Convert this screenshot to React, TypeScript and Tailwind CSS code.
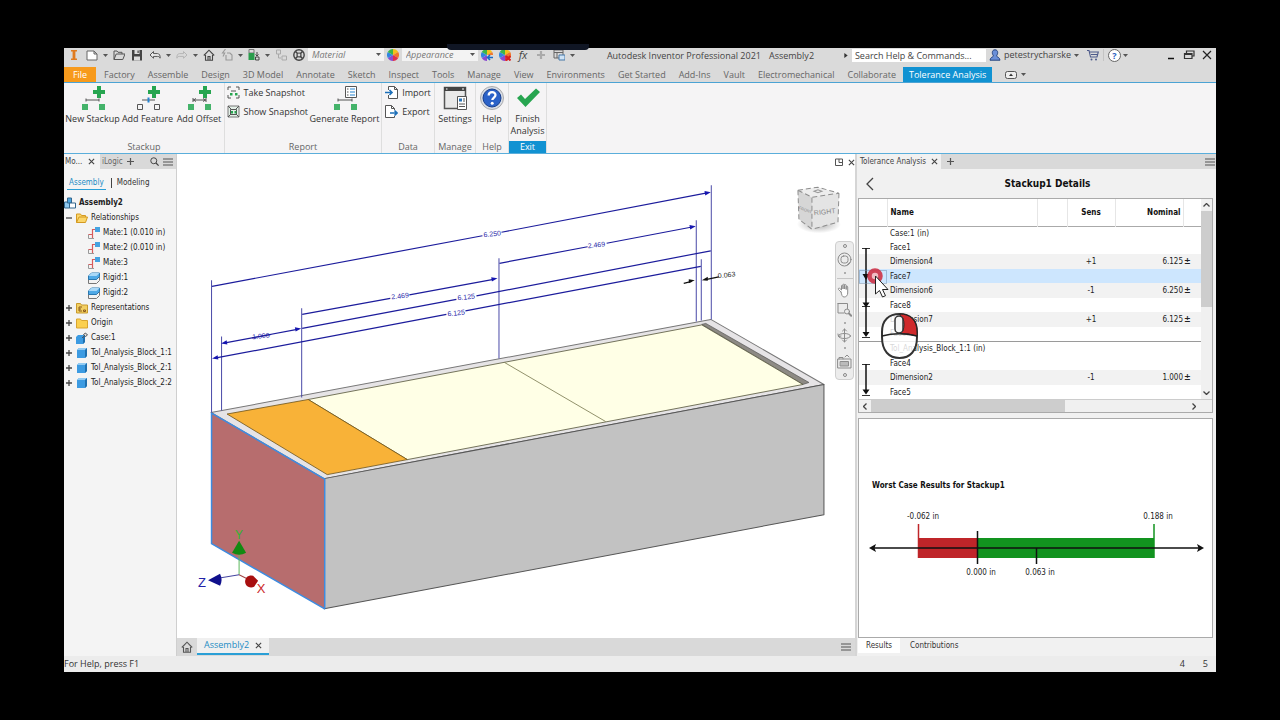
import type { ReactNode } from 'react';

const ui = 'font-["Open_Sans","Noto_Sans",sans-serif]';
const dense = 'font-["DejaVu_Sans_Condensed","DejaVu_Sans",sans-serif]';

const ribbonTabs = [
  'Factory', 'Assemble', 'Design', '3D Model', 'Annotate', 'Sketch', 'Inspect', 'Tools', 'Manage', 'View',
  'Environments', 'Get Started', 'Add-Ins', 'Vault', 'Electromechanical', 'Collaborate',
];

const tree = [
  { label: 'Relationships', level: 0, sign: '-', icon: 'folderOpen' },
  { label: 'Mate:1 (0.010 in)', level: 1, sign: '', icon: 'mate' },
  { label: 'Mate:2 (0.010 in)', level: 1, sign: '', icon: 'mate' },
  { label: 'Mate:3', level: 1, sign: '', icon: 'mate' },
  { label: 'Rigid:1', level: 1, sign: '', icon: 'rigid' },
  { label: 'Rigid:2', level: 1, sign: '', icon: 'rigid' },
  { label: 'Representations', level: 0, sign: '+', icon: 'reps' },
  { label: 'Origin', level: 0, sign: '+', icon: 'folder' },
  { label: 'Case:1', level: 0, sign: '+', icon: 'pinned' },
  { label: 'Tol_Analysis_Block_1:1', level: 0, sign: '+', icon: 'part' },
  { label: 'Tol_Analysis_Block_2:1', level: 0, sign: '+', icon: 'part' },
  { label: 'Tol_Analysis_Block_2:2', level: 0, sign: '+', icon: 'part' },
];

const rows = [
  { name: 'Case:1 (in)', kind: 'part' },
  { name: 'Face1', kind: 'face' },
  { name: 'Dimension4', kind: 'dim', sens: '+1', nominal: '6.125' },
  { name: 'Face7', kind: 'selected' },
  { name: 'Dimension6', kind: 'dim', sens: '-1', nominal: '6.250' },
  { name: 'Face8', kind: 'face' },
  { name: 'Dimension7', kind: 'dim', sens: '+1', nominal: '6.125' },
  { name: 'Face2', kind: 'face' },
  { name: 'Tol_Analysis_Block_1:1 (in)', kind: 'group' },
  { name: 'Face4', kind: 'face' },
  { name: 'Dimension2', kind: 'dim', sens: '-1', nominal: '1.000' },
  { name: 'Face5', kind: 'face' },
];

const rowStyles: Record<string, string> = {
  part: 'h-[14px]',
  face: 'h-[14px]',
  dim: 'h-[15px] bg-[#f2f2f2]',
  selected: 'h-[14px] bg-[#cde6fe]',
  group: 'h-[15px] border-t border-[#9a9a9a]',
};

/* ---------- small icons ---------- */

function Caret() {
  return (
    <svg className="h-[3px] w-[5px]" viewBox="0 0 5 3" aria-hidden="true">
      <path d="M0 0h5L2.5 3z" fill="#555" />
    </svg>
  );
}

function Svg({ children, className = 'size-3', box = '0 0 12 12' }: { children: ReactNode; className?: string; box?: string }) {
  return (
    <svg className={`shrink-0 ${className}`} viewBox={box} fill="none" aria-hidden="true">
      {children}
    </svg>
  );
}

function ColorWheel() {
  return (
    <>
      <path d="M6 6V0a6 6 0 0 1 5.2 3z" fill="#f3c11b" />
      <path d="M6 6l5.2-3a6 6 0 0 1 0 6z" fill="#f0762b" />
      <path d="M6 6l5.2 3A6 6 0 0 1 6 12z" fill="#e0304b" />
      <path d="M6 6v6a6 6 0 0 1-5.2-3z" fill="#8a4bd0" />
      <path d="M6 6L.8 9a6 6 0 0 1 0-6z" fill="#2f86e0" />
      <path d="M6 6L.8 3A6 6 0 0 1 6 0z" fill="#3ab54a" />
    </>
  );
}

function Close({ className = 'size-[7px]' }: { className?: string }) {
  return (
    <Svg className={className} box="0 0 8 8">
      <path d="M1 1l6 6M7 1L1 7" stroke="#444" strokeWidth="1.3" />
    </Svg>
  );
}

function Plus() {
  return (
    <Svg className="size-[7px]" box="0 0 8 8">
      <path d="M4 0v8M0 4h8" stroke="#555" strokeWidth="1.4" />
    </Svg>
  );
}

function Menu() {
  return (
    <Svg className="h-2 w-[10px]" box="0 0 10 8">
      <path d="M0 1h10M0 4h10M0 7h10" stroke="#555" strokeWidth="1.2" />
    </Svg>
  );
}

function HomeIcon() {
  return (
    <Svg>
      <path d="M.8 6.5L6 1.2l5.2 5.3M2.5 6v5.2h7V6M5 11V7.5h2V11" stroke="#555" strokeWidth="1.1" />
    </Svg>
  );
}

const quickIcons: Record<string, ReactNode> = {
  inventor: <path d="M3 1h6v1.6H7.4v6.8H9V11H3V9.4h1.6V2.6H3z" fill="#e07b1f" />,
  new: <path d="M1 2h7l3 3v6H1zM8 2v3h3" stroke="#666" fill="#fff" />,
  open: <path d="M1 10.5V2h3l1 1.3h4V5M1 10.5L3.2 5H12L9.8 10.5z" stroke="#555" />,
  save: (
    <>
      <path d="M1 1h10v10.5H1z" fill="#444" />
      <path d="M3.5 1h5v4h-5zM3 7.5h6v4H3z" fill="#ddd" />
      <path d="M6.5 1.5h1.2v2.6H6.5z" fill="#444" />
    </>
  ),
  undo: <path d="M4.5 2.5L1 6l3.5 3.2V7.4h4.2c1.6 0 2.2.8 2.3 1.8.5-2.8-.7-4.6-2.6-4.6H4.5z" stroke="#555" fill="#eee" />,
  redo: <path d="M7.5 2.5L11 6 7.5 9.2V7.4H3.3c-1.6 0-2.2.8-2.3 1.8C.5 6.4 1.7 4.6 3.6 4.6h3.9z" stroke="#b5b5b5" />,
  home: <path d="M.8 6.5L6 1.2l5.2 5.3M2.5 6v5.2h7V6M5 11V7.5h2V11" stroke="#444" strokeWidth="1.1" />,
  bolt: <path d="M4.5 0L1.5 4h2.2L2 7.5M6 4h3l2 2v5H5V6" stroke="#999" strokeWidth="1.1" />,
  adjust: (
    <>
      <path d="M1 .5h5V4H1z" fill="#ddd" stroke="#777" />
      <path d="M.5 4h6v7h-6z" fill="#2a9d4c" />
      <path d="M7.5 8h3.5v3H7.500zM9 3v4M7.5 5.5L9 7l1.5-1.5" stroke="#444" />
    </>
  ),
  link: <path d="M1.5 1h4v4h-4zM3.5 5v4H6M7 7h4.5v4H7z" stroke="#aaa" />,
  material: (
    <>
      <circle cx="6" cy="6" r="5.2" stroke="#444" strokeWidth="1.4" />
      <circle cx="6" cy="6" r="2" stroke="#444" strokeWidth="1.2" />
      <path d="M2.5 2.5l2 2M9.5 2.5l-2 2M2.5 9.5l2-2M9.5 9.5l-2-2" stroke="#444" strokeWidth="1.6" />
    </>
  ),
  wheel: <ColorWheel />,
  wheelBlue: (
    <>
      <ColorWheel />
      <path d="M6 6h6v6H6z" fill="#dadada" />
      <path d="M6.500 8.500H12M9 6L6.500 8.500 9 11" stroke="#1769c5" strokeWidth="1.6" />
    </>
  ),
  wheelRed: (
    <>
      <ColorWheel />
      <path d="M7 7l4.5 4.5M11.5 7L7 11.5" stroke="#d81f1f" strokeWidth="2" />
    </>
  ),
  plus: <path d="M6 2v8M2 6h8" stroke="#aaa" strokeWidth="2.2" />,
  panel: (
    <>
      <path d="M1 1h9v8H1zM1 3.5h9M4 3.5V9" stroke="#666" />
      <path d="M6 6h6v5H6z" fill="#cfe3f5" stroke="#4678a8" />
    </>
  ),
};

function QuickButton({ name, label }: { name: string; label: string }) {
  return (
    <button type="button" aria-label={label} className="flex w-[18px] shrink-0 items-center justify-center">
      <Svg>{quickIcons[name]}</Svg>
    </button>
  );
}

function DropButton({ label }: { label: string }) {
  return (
    <button type="button" aria-label={label} className="flex w-[9px] shrink-0 items-center justify-center">
      <Caret />
    </button>
  );
}

function Combo({ label }: { label: string }) {
  return (
    <div className="relative w-[76px] shrink-0">
      <select aria-label={label} className="h-[13px] w-full appearance-none bg-[#f3f3f3] px-1 text-[9px] leading-[13px] text-[#777] italic">
        <option>{label}</option>
      </select>
      <span className="pointer-events-none absolute top-[5px] right-[3px]">
        <Caret />
      </span>
    </div>
  );
}

function TitleBar() {
  return (
    <header className="flex h-[19px] items-center bg-[#dadada] pl-px text-[9px] text-[#444]">
      <div className="flex shrink-0 items-center pb-[5px]">
        <QuickButton name="inventor" label="Application menu" />
        <QuickButton name="new" label="New" />
        <DropButton label="New options" />
        <QuickButton name="open" label="Open" />
        <QuickButton name="save" label="Save" />
        <QuickButton name="undo" label="Undo" />
        <DropButton label="Undo list" />
        <QuickButton name="redo" label="Redo" />
        <DropButton label="Redo list" />
        <QuickButton name="home" label="Home" />
        <QuickButton name="bolt" label="Selection" />
        <DropButton label="Selection options" />
        <QuickButton name="adjust" label="Update" />
        <DropButton label="Update options" />
        <QuickButton name="link" label="Local update" />
        <QuickButton name="material" label="Material browser" />
        <Combo label="Material" />
        <QuickButton name="wheel" label="Appearance browser" />
        <Combo label="Appearance" />
        <QuickButton name="wheelBlue" label="Adjust appearance" />
        <QuickButton name="wheelRed" label="Clear appearance" />
        <button type="button" aria-label="Parameters" className="w-[18px] text-center text-[11px] leading-3 italic">
          fx
        </button>
        <QuickButton name="plus" label="Add" />
        <QuickButton name="panel" label="Design doctor" />
        <DropButton label="Customize toolbar" />
      </div>
      <h1 className="flex grow justify-center gap-2 pb-1 whitespace-nowrap">
        <span>Autodesk Inventor Professional 2021</span>
        <span>Assembly2</span>
      </h1>
      <div className="flex shrink-0 items-center pb-[5px]">
        <Svg className="mr-1 h-[5px] w-[4px]" box="0 0 4 6">
          <path d="M0 0v6l4-3z" fill="#333" />
        </Svg>
        <input
          aria-label="Search help and commands"
          placeholder="Search Help & Commands..."
          className="h-[13px] w-[134px] bg-white px-[3px] text-[9px] leading-[13px] placeholder:text-[#444]"
        />
        <button type="button" className="flex items-center gap-[3px] pl-[3px]">
          <Svg>
            <path d="M6 .8c1.8 0 2.7 1.2 2.7 2.8S7.8 6.5 7.4 7c.3.9 3.4 1.2 3.6 4.2H1C1.2 8.200 4.300 7.900 4.600 7 4.200 6.500 3.300 5.200 3.300 3.600S4.200.8 6 .8z" fill="#6a8fd8" stroke="#27457f" />
          </Svg>
          <span>petestrycharske</span>
          <Caret />
        </button>
        <button type="button" aria-label="App store" className="ml-2 flex">
          <Svg>
            <path d="M0 1.500h2l1.500 6.500h6.500l1.300-5H2.800M4 5.500h6.500" stroke="#4d5a8a" strokeWidth="1.100" />
            <circle cx="4.500" cy="10.500" r="1" fill="#4d5a8a" />
            <circle cx="9" cy="10.500" r="1" fill="#4d5a8a" />
          </Svg>
        </button>
        <span className="mx-1 h-3 w-px bg-[#c4c4c4]" />
        <button type="button" aria-label="Help" className="flex size-[13px] items-center justify-center rounded-full border border-[#666] bg-white text-[9px] leading-[9px] font-bold text-[#2b5fc0]">
          ?
        </button>
        <DropButton label="Help options" />
        <div className="ml-8 flex">
          <button type="button" aria-label="Minimize" className="flex w-[18px] items-center justify-center">
            <Svg><path d="M3 9.500h6" stroke="#111" strokeWidth="1.500" /></Svg>
          </button>
          <button type="button" aria-label="Restore" className="flex w-[18px] items-center justify-center">
            <Svg><path d="M3.500 4V2H11v5H9M1.500 4.500H9v5H1.500zM1.500 5.500H9" stroke="#333" strokeWidth="1.200" /></Svg>
          </button>
          <button type="button" aria-label="Close" className="flex w-[18px] items-center justify-center">
            <Svg><path d="M2 2l8 8M10 2l-8 8" stroke="#222" strokeWidth="1.200" /></Svg>
          </button>
        </div>
      </div>
    </header>
  );
}

function RibbonTabs() {
  return (
    <nav aria-label="Ribbon" className="flex h-4 items-stretch gap-px border-b border-[#4ba3d4] bg-[#dadada] text-[9px] leading-[14px] text-[#666]">
      <button type="button" className="mr-px w-8 shrink-0 bg-[#f79a1c] text-white">File</button>
      {ribbonTabs.map((tab) => (
        <button key={tab} type="button" className="shrink-0 px-[6px] whitespace-nowrap">{tab}</button>
      ))}
      <button type="button" className="shrink-0 bg-[#1192d2] px-[6px] whitespace-nowrap text-white">Tolerance Analysis</button>
      <button type="button" aria-label="Ribbon display" className="ml-3 flex items-center gap-1">
        <Svg className="h-2 w-[12px]" box="0 0 12 8">
          <rect x=".500" y=".500" width="11" height="7" rx="2" stroke="#555" fill="#eee" />
          <path d="M4 5h4L6 2.500z" fill="#333" />
        </Svg>
        <Caret />
      </button>
    </nav>
  );
}

/* ---------- ribbon ---------- */

const bigIcons: Record<string, ReactNode> = {
  stackup: (
    <>
      <path d="M16 0h4v4h4v4h-4v4h-4V8h-4V4h4z" fill="#27a550" />
      <path d="M5 14h13M5 12.500v3M18 12.500v3" stroke="#555" />
      <path d="M1 18h6v6H1zM18 18h6v6h-6z" fill="#44b36a" />
    </>
  ),
  feature: (
    <>
      <path d="M16 0h4v4h4v4h-4v4h-4V8h-4V4h4z" fill="#27a550" />
      <path d="M6 14h13" stroke="#555" />
      <path d="M12.500 11.500v5" stroke="#2583d0" strokeWidth="2" />
      <path d="M1.500 18.500h5v5h-5zM18.500 18.500h5v5h-5z" stroke="#555" />
    </>
  ),
  offset: (
    <>
      <path d="M16 0h4v4h4v4h-4v4h-4V8h-4V4h4z" fill="#27a550" />
      <path d="M6 14h13M6 12v4M19 12v4M9 12.500L6.500 14 9 15.500M16 12.500l2.500 1.500-2.500 1.500" stroke="#555" />
      <path d="M1 18h6v6H1zM18 18h6v6h-6z" fill="#44b36a" />
    </>
  ),
  report: (
    <>
      <path d="M12.500.5h11v11h-11z" fill="#fff" stroke="#555" />
      <path d="M17 3h5M17 6h5M17 9h5" stroke="#2583d0" />
      <path d="M14 3h1.500M14 6h1.500M14 9h1.500" stroke="#555" />
      <path d="M5 14h14M5 12.500v3M19 12.500v3" stroke="#555" />
      <path d="M1 18h6v6H1zM18 18h6v6h-6z" fill="#44b36a" />
    </>
  ),
  settings: (
    <>
      <path d="M1.500 1.500h21v21h-21z" fill="#e9e9e9" stroke="#555" strokeWidth="1.500" />
      <path d="M1 1h22v4H1z" fill="#444" />
      <path d="M3 3h1.500M19 3h2" stroke="#fff" />
      <path d="M14.500 10.500h9v13h-9z" fill="#fff" stroke="#555" />
      <path d="M16 12.500h3v3h-3z" fill="#2673b8" />
      <path d="M20 13h2M20 15h2M16 18h6M16 20.500h6" stroke="#555" />
    </>
  ),
  help: (
    <>
      <circle cx="12" cy="12" r="11.500" fill="#d8dde6" stroke="#aaa" />
      <circle cx="12" cy="12" r="9" fill="#2b62c8" stroke="#173e8c" />
      <path d="M8.700 9.400c0-4.500 6.800-4.300 6.800-.3 0 2.400-3.200 2.500-3.200 5" stroke="#fff" strokeWidth="2.300" />
      <circle cx="12.200" cy="17.200" r="1.500" fill="#fff" />
    </>
  ),
  check: <path d="M1 12l4-3.500 4 4.500L20 2.500 24 6 9.500 21z" fill="#27a550" />,
};

function BigButton({ icon, label, width }: { icon: string; label: ReactNode; width: string }) {
  return (
    <button type="button" className={`flex shrink-0 flex-col items-center gap-[3px] pt-[3px] text-[9px] leading-3 whitespace-nowrap text-[#333] ${width}`}>
      <Svg className="size-6" box="0 0 24 24">{bigIcons[icon]}</Svg>
      <span>{label}</span>
    </button>
  );
}

function SmallButton({ label, children }: { label: string; children: ReactNode }) {
  return (
    <button type="button" className="flex h-[19px] items-center gap-1 text-[9px] whitespace-nowrap text-[#333]">
      <Svg className="size-[13px]" box="0 0 13 13">{children}</Svg>
      {label}
    </button>
  );
}

function Panel({ title, width, children, active = false }: { title: string; width: string; children: ReactNode; active?: boolean }) {
  return (
    <section className={`flex shrink-0 flex-col border-r border-[#dedede] ${width}`}>
      <div className="flex grow justify-center">{children}</div>
      <h2 className={`text-center text-[9px] leading-3 ${active ? 'bg-[#1192d2] text-white' : 'text-[#666]'}`}>{title}</h2>
    </section>
  );
}

function Ribbon() {
  return (
    <div className="flex h-[71px] border-b border-[#5aaedb] bg-[#f5f4f5]">
      <Panel title="Stackup" width="w-[161px]">
        <BigButton icon="stackup" label="New Stackup" width="w-14" />
        <BigButton icon="feature" label="Add Feature" width="w-[54px]" />
        <BigButton icon="offset" label="Add Offset" width="w-[49px]" />
      </Panel>
      <Panel title="Report" width="w-[157px]">
        <div className="w-[83px]">
          <SmallButton label="Take Snapshot">
            <path d="M1 4V1h3M9 1h3v3M12 9v3H9M4 12H1V9" stroke="#555" />
            <path d="M4 5h5" stroke="#555" />
            <path d="M3 7h2.500v2.500H3zM8 7h2.500v2.500H8z" fill="#27a550" />
          </SmallButton>
          <SmallButton label="Show Snapshot">
            <path d="M1 1h11v11H1z" stroke="#777" fill="#e3efe7" />
            <path d="M1 1l3 3M12 1L9 4M12 12L9 9M1 12l3-3M3.500 4.500h6v5h-6z" stroke="#555" />
            <path d="M4 6h2v2.500H4zM7.500 6h2v2.500h-2z" fill="#27a550" />
          </SmallButton>
        </div>
        <BigButton icon="report" label="Generate Report" width="w-[70px]" />
      </Panel>
      <Panel title="Data" width="w-[53px]">
        <div>
          <SmallButton label="Import">
            <path d="M3.500 4V.5h6l3 3v9h-9V9M9.500.5v3h3" stroke="#555" fill="#fff" />
            <path d="M0 6.500h7M4.500 4L7 6.500 4.500 9" stroke="#1d6fb8" strokeWidth="1.600" />
          </SmallButton>
          <SmallButton label="Export">
            <path d="M9.500 5V3.500l-3-3h-6v12h9V11M6.500.5v3h3" stroke="#555" fill="#fff" />
            <path d="M5 8h7M9.500 5.500L12 8l-2.500 2.500" stroke="#1d6fb8" strokeWidth="1.600" />
          </SmallButton>
        </div>
      </Panel>
      <Panel title="Manage" width="w-[41px]">
        <BigButton icon="settings" label="Settings" width="w-10" />
      </Panel>
      <Panel title="Help" width="w-[33px]">
        <BigButton icon="help" label="Help" width="w-8" />
      </Panel>
      <Panel title="Exit" width="w-[38px]" active>
        <BigButton icon="check" label={<>Finish<br />Analysis</>} width="w-9" />
      </Panel>
    </div>
  );
}

/* ---------- model browser ---------- */

const treeIcons: Record<string, ReactNode> = {
  assembly: (
    <>
      <path d="M.5 5h5v6h-5z" fill="#8ec9f0" stroke="#33668c" />
      <path d="M3.500 1h4v5h-4z" fill="#4aa5e0" stroke="#33668c" />
      <path d="M5.500 6h6v5h-6z" fill="#fff" stroke="#33668c" />
    </>
  ),
  folderOpen: <path d="M.5 10.500V2h4l1 1.500h4V5M.5 10.500L3 5h8.500L9.500 10.500z" fill="#fbd66b" stroke="#d49a22" />,
  folder: <path d="M.5 2h4l1 1.500h6v7.500H.5z" fill="#fbd04f" stroke="#d9a52e" />,
  reps: (
    <>
      <path d="M.5 1.500h4l1 1.500h6v8H.5z" fill="#f2cf62" stroke="#c99a2c" />
      <path d="M3 5h3M3 5v4h3M3 7h2M7.500 8h2v1.500h-2z" stroke="#8a5a1c" />
    </>
  ),
  mate: (
    <>
      <path d="M.5 7.500v4H6" stroke="#999" />
      <path d="M4.500 11V2.500H7M.5 7.500h4" stroke="#d65c5c" strokeWidth="1.200" />
      <path d="M7 0h5v5H7z" fill="#46a3e0" />
    </>
  ),
  rigid: (
    <>
      <path d="M.5 7h8l3-3v4.500l-3 3h-8z" fill="#f2f2f2" stroke="#777" />
      <path d="M.5 4l3-3h8v3.500l-3 3h-8z" fill="#4fa9e6" stroke="#2a78b0" />
      <path d="M.5 4l3-3h8l-3 3z" fill="#a9d8f7" />
    </>
  ),
  part: (
    <>
      <path d="M1 3l2-2h8v8l-2 2H1z" fill="#3c9be2" />
      <path d="M1 3l2-2h8L9 3z" fill="#93cbf2" />
      <path d="M9 3l2-2v8l-2 2z" fill="#1f6fae" />
    </>
  ),
  pinned: (
    <>
      <path d="M0 5l2-2h7v7l-2 2H0z" fill="#3c9be2" />
      <path d="M7 5l2-2v7l-2 2z" fill="#1f6fae" />
      <path d="M6 6l2-2M7.500 2.500l2 2 2-1.500-2-2z" stroke="#555" fill="#ddd" />
    </>
  ),
};

function ModelBrowser() {
  return (
    <aside className={`flex w-[113px] shrink-0 flex-col border-r border-[#cfcfcf] bg-[#f4f4f4] ${dense}`}>
      <div className="flex h-[15px] items-center bg-[#d9d9d9] text-[8px] text-[#666]">
        <div className="flex h-full w-9 items-center justify-between bg-[#f4f4f4] pr-[5px] pl-px text-[#444]">
          Mo...
          <Close />
        </div>
        <button type="button" className="px-[2px]">iLogic</button>
        <button type="button" aria-label="Add panel" className="ml-[2px]"><Plus /></button>
        <button type="button" aria-label="Search" className="mr-1 ml-auto">
          <Svg className="size-[9px]">
            <circle cx="5" cy="5" r="4" stroke="#444" strokeWidth="1.300" />
            <path d="M8 8l3.500 3.500" stroke="#444" strokeWidth="1.600" />
          </Svg>
        </button>
        <button type="button" aria-label="Browser menu" className="mr-[3px]"><Menu /></button>
      </div>
      <div className="flex h-6 items-center gap-[5px] pt-1 pl-[3px] text-[8px] text-[#333]">
        <button type="button" className="border-b border-[#2a9fd6] px-[2px] text-[#1d8cc4]">Assembly</button>
        <span className="h-[10px] w-px bg-[#444]" />
        <button type="button" className="border-b border-transparent">Modeling</button>
      </div>
      <ul className="pt-[2px] text-[8px] leading-[15px] whitespace-nowrap text-[#222]">
        <li className="flex h-[15px] items-center gap-[3px] font-bold">
          <Svg>{treeIcons.assembly}</Svg>
          Assembly2
        </li>
        {tree.map((node) => (
          <li key={node.label} className={`flex h-[15px] items-center gap-[3px] ${node.level ? 'pl-6' : 'pl-[2px]'}`}>
            {!node.level && (
              <Svg className="mr-px size-[6px]" box="0 0 6 6">
                <path d={node.sign === '+' ? 'M0 3h6M3 0v6' : 'M0 3h6'} stroke="#444" strokeWidth="1.300" />
              </Svg>
            )}
            <Svg>{treeIcons[node.icon]}</Svg>
            {node.label}
          </li>
        ))}
      </ul>
    </aside>
  );
}

/* ---------- 3D view ---------- */

const extensionLines = [
  'M212.500 280V412', 'M222.500 336V410', 'M302.500 308V397', 'M499.500 258V358', 'M696.500 220V321', 'M701.500 259V320', 'M711.500 185V319',
];

const dimensionLines = [
  'M213 286L483 235.500M502 232L706 193', 'M303 314L391 298M410 294.500L494 279', 'M500 263L588 246.500M607 243L691 227',
  'M303 328L457 299M477 295.500L711 250.500', 'M217 357.500L447 314M466 310.500L701 266', 'M226 342.500L298 329',
];

const dimensionLabels = [
  { x: 493, y: 236, value: '6.250' },
  { x: 401, y: 298, value: '2.469' },
  { x: 597, y: 247, value: '2.469' },
  { x: 467, y: 299, value: '6.125' },
  { x: 457, y: 315, value: '6.125' },
  { x: 262, y: 338, value: '1.000' },
];

// arrow heads: tip position and direction in degrees
const arrowHeads = [
  { x: 711, y: 192, turn: -10 },
  { x: 498, y: 278, turn: -10 },
  { x: 696, y: 226, turn: -10 },
  { x: 302, y: 328, turn: -10 },
  { x: 222, y: 343, turn: 170 },
  { x: 213, y: 358, turn: 170 },
];

function Model() {
  return (
    <svg className="block h-full w-full" viewBox="178 154 677 483" role="img" aria-label="Assembly with stackup dimensions">
      <defs>
        <radialGradient id="shade">
          <stop offset="0" stopColor="#999" stopOpacity=".8" />
          <stop offset="1" stopColor="#999" stopOpacity="0" />
        </radialGradient>
      </defs>
      <g strokeLinejoin="round" strokeWidth="1">
        <path d="M212 412L711 319L824 384L325 478z" fill="#e6e4e6" stroke="#777" />
        <path d="M325 478L824 384V514L325 608z" fill="#c2c2c2" stroke="#555" />
        <path d="M706 323L809 382L803 384L702 324z" fill="#8d8a84" stroke="#555" strokeWidth=".700" />
        <path d="M309 399L702 324.500L803 384L408 459z" fill="#ffffe6" stroke="#55553a" strokeWidth=".800" />
        <path d="M505 362L606 421" stroke="#77774e" strokeWidth=".800" />
        <path d="M228 413.500L309 399L408 459L328 474z" fill="#f8b238" stroke="#6d5218" strokeWidth=".800" />
        <path d="M212.500 412.500L325.500 478.500V608L212.500 543z" fill="#b76d6e" stroke="#3d8be0" strokeWidth="1.500" />
      </g>

      <g stroke="#4a4aa8" strokeWidth="1">
        {extensionLines.map((d) => <path key={d} d={d} />)}
      </g>
      <g stroke="#1c1c9c" strokeWidth="1.200">
        {dimensionLines.map((d) => <path key={d} d={d} />)}
      </g>
      {arrowHeads.map((a) => (
        <path key={`${a.x}-${a.y}`} d="M0 0l-6-2.200v4.400z" fill="#1616b0" transform={`translate(${a.x} ${a.y}) rotate(${a.turn})`} />
      ))}
      <g fontFamily="Liberation Sans, sans-serif" fontSize="7" textAnchor="middle" fill="#2424a8">
        {dimensionLabels.map((l) => (
          <text key={`${l.x}-${l.y}`} x={l.x} y={l.y} transform={`rotate(-6 ${l.x} ${l.y})`}>{l.value}</text>
        ))}
        <text x="727" y="277" fill="#222" transform="rotate(-6 727 277)">0.063</text>
      </g>
      <path d="M253 337.500L272 334" stroke="#1c1c9c" />
      <path d="M684 283L692 281M707 279L719 276.500" stroke="#111" strokeWidth="1.300" />
      <path d="M695 280l-6-1v4zM702 280l6-3.500v4z" fill="#111" />

      {/* origin triad */}
      <path d="M240 574V552" stroke="#5cb85c" />
      <path d="M240 574L222 577" stroke="#4444a0" />
      <path d="M240 574L250 579" stroke="#a04444" />
      <path d="M240 540L247 552Q240 556 233 552z" fill="#128a12" />
      <path d="M209 579.500L221 573Q224 579 221 585z" fill="#10108c" />
      <path d="M246 581a6 6 0 0 1 8-6l5 5-4 6a6 6 0 0 1-9-5z" fill="#a80f0f" />
      <g fontFamily="Liberation Sans, sans-serif" fontSize="13" textAnchor="middle">
        <text x="240" y="538" fill="#2fb52f" fontSize="12">Y</text>
        <text x="203" y="586" fill="#2222a8">Z</text>
        <text x="262" y="592" fill="#cc2a2a">X</text>
      </g>

      {/* view cube */}
      <ellipse cx="819" cy="224" rx="22" ry="9" fill="url(#shade)" />
      <path d="M798 190L818 187L839 193L812 197z" fill="#ededed" />
      <path d="M798 190L812 197V229L799 219z" fill="#d6d6d6" />
      <path d="M812 197L839 193L838 222L812 229z" fill="#e4e4e4" />
      <path d="M798 190L818 187L839 193L812 197zM798 190L799 219L812 229V197M839 193L838 222L812 229" stroke="#8d8d8d" strokeDasharray="5 3" fill="none" />
      <g fontFamily="Liberation Sans, sans-serif" fill="#8a8a8a" textAnchor="middle">
        <text x="825" y="214" fontSize="7" transform="rotate(-6 825 214)">RIGHT</text>
        <text x="805" y="211" fontSize="4" transform="rotate(20 805 211)">FRONT</text>
      </g>
      <path d="M814 191l4-1.500 4 1.500-4 1.500z" stroke="#999" fill="none" />
    </svg>
  );
}

function NavButton({ label, children }: { label: string; children: ReactNode }) {
  return (
    <button type="button" aria-label={label}>
      <Svg className="size-[15px]" box="0 0 15 15">
        <g stroke="#8c8c8c" strokeLinecap="round" strokeLinejoin="round">{children}</g>
      </Svg>
    </button>
  );
}

const dot = <span className="size-[2px] rounded-full bg-[#999]" />;

function NavigationBar() {
  return (
    <div className="absolute top-[87px] right-px flex h-[139px] w-[19px] flex-col items-center justify-between rounded border border-[#cfcfcf] bg-[#ececec] py-[2px]">
      <span className="size-[4px] rounded-full border border-[#888]" />
      <NavButton label="Full navigation wheel">
        <circle cx="7.500" cy="7.500" r="6.500" />
        <rect x="4" y="4" width="7" height="7" rx="2.500" />
        <path d="M10.500 12.500l2.500-2" />
      </NavButton>
      {dot}
      <span className="h-px w-4 bg-[#c5c5c5]" />
      <NavButton label="Pan">
        <path d="M4 9L1.500 6.500c-.8-1 .6-1.800 1.400-1L4.500 7V3c0-1.200 1.500-1.200 1.500 0v3-4c0-1.200 1.600-1.200 1.600 0v4-3.500c0-1.200 1.600-1.200 1.600 0V6.500 4c0-1.200 1.500-1.200 1.500 0v6c0 2-1.200 4-3.500 4S5 12 4 9z" fill="#fff" />
      </NavButton>
      <NavButton label="Zoom window">
        <path d="M1 1.500h9.500v5M1 1.500v9.500h6" />
        <circle cx="10" cy="9.500" r="2.500" />
        <path d="M12 11.500l2.200 2.200" strokeWidth="2" />
      </NavButton>
      {dot}
      <NavButton label="Orbit">
        <ellipse cx="7.500" cy="8" rx="6" ry="2.500" />
        <path d="M7.500 1v13M5.500 3l2-2 2 2M5.500 12l2 2 2-2M1 6l.5 2.500L4 8" />
      </NavButton>
      {dot}
      <NavButton label="Look at">
        <path d="M1 5h13v9H1zM2 5V3.500h4V5M8 3l2-2 2 2" />
        <path d="M3.500 7.500h8V12h-8z" fill="#bbb" />
      </NavButton>
      <span className="size-[4px] rounded-full border border-[#888]" />
    </div>
  );
}

function Viewport() {
  return (
    <main className="flex min-w-0 grow flex-col bg-white">
      <div className="relative grow">
        <Model />
        <NavigationBar />
        <div className="absolute top-1 right-0 flex items-center gap-[5px]">
          <button type="button" aria-label="Tile window">
            <Svg className="size-2" box="0 0 8 8"><path d="M.5 1h7v6.500h-7zM4 1v3.500h3.500" stroke="#555" /></Svg>
          </button>
          <button type="button" aria-label="Close view"><Close /></button>
        </div>
      </div>
      <div className="flex h-[18px] items-center bg-[#d9d9d9] pb-px">
        <button type="button" aria-label="Home tab" className="flex w-5 justify-center"><HomeIcon /></button>
        <div className="flex h-full items-center gap-[6px] border-b-2 border-[#2a9fd6] bg-[#f0f0f0] px-[7px] pb-px text-[9px] leading-3 text-[#1d8cc4]">
          Assembly2
          <button type="button" aria-label="Close document"><Close /></button>
        </div>
        <button type="button" aria-label="Document list" className="mr-1 ml-auto"><Menu /></button>
      </div>
    </main>
  );
}

/* ---------- tolerance panel ---------- */

function StackArrows() {
  return (
    <svg className="pointer-events-none absolute top-0 left-0 h-[201px] w-7" viewBox="859 198 28 201" aria-hidden="true">
      <path d="M862 247.500h8M862 305.500h8M862 336.500h8M862 363.500h8M862 394.500h8" stroke="#333" />
      <path d="M866 247v87M866 363v29" stroke="#111" strokeWidth="1.500" />
      <path d="M862.500 273h7l-3.500 6zM862.500 301.500h7l-3.500 5zM862.500 331h7l-3.500 5zM862.500 388.500h7l-3.500 5z" fill="#111" />
      <path d="M859.500 269.500h27v13h-27z" stroke="#6f8fb0" strokeDasharray="1 1" fill="none" />
    </svg>
  );
}

function ClickMarker() {
  return (
    <svg className="pointer-events-none absolute top-16 left-[7px] h-[100px] w-14" viewBox="866 262 56 100" aria-hidden="true">
      <circle cx="875" cy="275" r="5.500" fill="#f4b8bd" stroke="#cf3347" strokeWidth="4.500" opacity=".9" />
      <path d="M875.500 275v18l4-3.500 3 6.500 3-1.300-3-6.200h5.500z" fill="#fff" stroke="#222" />
      <path d="M882 332v-1c0-12 7-18 17.500-18s17.500 6 17.500 18v5c0 14-7 21-17.500 21S882 350 882 336z" fill="#fff" fillOpacity=".82" stroke="#333" strokeWidth="2" />
      <path d="M900 313c10 0 17 6 17 18v4q-8-2.500-17-2.500 4-2 4-9t-4-9z" fill="#cf2a2c" stroke="#222" />
      <path d="M882 335q17-4.500 35 0" stroke="#222" strokeWidth="1.500" fill="none" />
      <rect x="895" y="315" width="8" height="17" rx="4" fill="#f5f5f5" stroke="#333" strokeWidth="1.500" />
    </svg>
  );
}

function StackupTable() {
  return (
    <div className="relative border border-[#aaa] bg-white">
      <div className="flex">
        <table className={`grow table-fixed border-collapse text-[8px] leading-[13px] text-[#222] ${dense}`}>
          <colgroup>
            <col className="w-[28px]" />
            <col />
            <col className="w-[30px]" />
            <col className="w-[48px]" />
            <col className="w-[68px]" />
            <col className="w-[18px]" />
          </colgroup>
          <thead>
            <tr className="h-[27px] border-b border-[#aaa] text-[#111]">
              <th className="border-r border-[#e6e6e6]" />
              <th className="border-r border-[#e6e6e6] pl-[3px] text-left">Name</th>
              <th className="border-r border-[#e6e6e6]" />
              <th className="border-r border-[#e6e6e6]">Sens</th>
              <th className="border-r border-[#e6e6e6] pr-[2px] text-right">Nominal</th>
              <th />
            </tr>
          </thead>
          <tbody>
            {rows.map((row) => (
              <tr key={row.name} className={rowStyles[row.kind]}>
                <td />
                <td className="pl-[3px]">{row.name}</td>
                <td />
                <td className="text-center">{row.sens}</td>
                <td className="text-right">{row.nominal}</td>
                <td className="pl-px text-[9px] font-bold">{row.nominal && '±'}</td>
              </tr>
            ))}
          </tbody>
        </table>
        <div className="flex w-[11px] shrink-0 flex-col items-center bg-[#f0f0f0]">
          <Svg className="my-1 h-1 w-[7px]" box="0 0 7 4"><path d="M.5 3.500l3-3 3 3" stroke="#444" strokeWidth="1.300" /></Svg>
          <div className="h-24 w-full bg-[#cdcdcd]" />
          <Svg className="mt-auto mb-1 h-1 w-[7px]" box="0 0 7 4"><path d="M.5.5l3 3 3-3" stroke="#444" strokeWidth="1.300" /></Svg>
        </div>
      </div>
      <div className="flex h-[13px] items-center border-t border-[#ccc] bg-[#f0f0f0]">
        <Svg className="mx-1 h-[7px] w-1" box="0 0 4 7"><path d="M3.500.5l-3 3 3 3" stroke="#444" strokeWidth="1.300" /></Svg>
        <div className="h-full w-[55%] bg-[#cdcdcd]" />
        <Svg className="mr-4 ml-auto h-[7px] w-1" box="0 0 4 7"><path d="M.5.5l3 3-3 3" stroke="#444" strokeWidth="1.300" /></Svg>
      </div>
      <StackArrows />
      <ClickMarker />
    </div>
  );
}

function ResultsChart() {
  return (
    <svg className="w-full" viewBox="859 505 353 80" role="img" aria-label="Worst case range from -0.062 in to 0.188 in">
      <path d="M918 538h59v20h-59z" fill="#bf2529" />
      <path d="M977 538h177v20H977z" fill="#12931f" />
      <path d="M918.500 524v34" stroke="#bf2529" strokeWidth="1.500" />
      <path d="M1154 524v34" stroke="#12931f" strokeWidth="1.500" />
      <path d="M873 548h327M977.500 531v33M1036.500 548v16" stroke="#111" strokeWidth="1.500" />
      <path d="M869 548l7-4-1.500 4 1.500 4zM1204 548l-7-4 1.500 4-1.500 4z" fill="#111" />
      <g fontFamily="DejaVu Sans Condensed, DejaVu Sans, sans-serif" fontSize="8" fill="#222" textAnchor="middle">
        <text x="923" y="519">-0.062 in</text>
        <text x="1158" y="519">0.188 in</text>
        <text x="981" y="575">0.000 in</text>
        <text x="1040" y="575">0.063 in</text>
      </g>
    </svg>
  );
}

function TolerancePanel() {
  return (
    <aside className={`flex w-[361px] shrink-0 flex-col border-l-2 border-[#d5d5d5] bg-[#f1f1f1] ${dense}`}>
      <div className="flex h-[15px] items-center gap-[6px] bg-[#d9d9d9] pr-px text-[8px] text-[#444]">
        <div className="flex h-full items-center gap-[5px] bg-[#f1f1f1] px-[3px]">
          Tolerance Analysis
          <Close />
        </div>
        <button type="button" aria-label="Add panel"><Plus /></button>
        <button type="button" aria-label="Panel menu" className="ml-auto"><Menu /></button>
      </div>
      <div className="flex grow flex-col pr-[3px] pl-px">
        <div className="flex h-[29px] items-center gap-2 pl-2">
          <button type="button" aria-label="Back">
            <Svg className="h-[14px] w-2" box="0 0 8 14"><path d="M7 1L1 7l6 6" stroke="#444" strokeWidth="1.300" /></Svg>
          </button>
          <h2 className="grow text-center text-[10px] font-bold text-[#111]">Stackup1 Details</h2>
        </div>
        <StackupTable />
        <div className="mt-[5px] flex grow flex-col border border-[#aaa] bg-white">
          <h3 className="mt-[61px] ml-[13px] text-[8px] leading-3 font-bold text-[#111]">Worst Case Results for Stackup1</h3>
          <div className="mt-[13px]"><ResultsChart /></div>
        </div>
        <div className="mb-[3px] flex h-[15px] items-center text-[8px] text-[#333]">
          <button type="button" className="h-full bg-white px-2">Results</button>
          <button type="button" className="px-[10px]">Contributions</button>
        </div>
      </div>
    </aside>
  );
}

export default function App() {
  return (
    <div className={`relative flex min-h-screen flex-col bg-black px-16 py-12 ${ui}`}>
      <div className="absolute top-11 left-[447px] z-10 h-[6px] w-[142px] rounded-b bg-[#101624]" />
      <TitleBar />
      <RibbonTabs />
      <Ribbon />
      <div className="flex grow">
        <ModelBrowser />
        <Viewport />
        <TolerancePanel />
      </div>
      <footer className="flex h-4 items-center justify-between bg-[#ececec] pr-2 text-[9px] text-[#333]">
        <span>For Help, press F1</span>
        <span className="flex gap-[18px]">
          <span>4</span>
          <span>5</span>
        </span>
      </footer>
    </div>
  );
}
